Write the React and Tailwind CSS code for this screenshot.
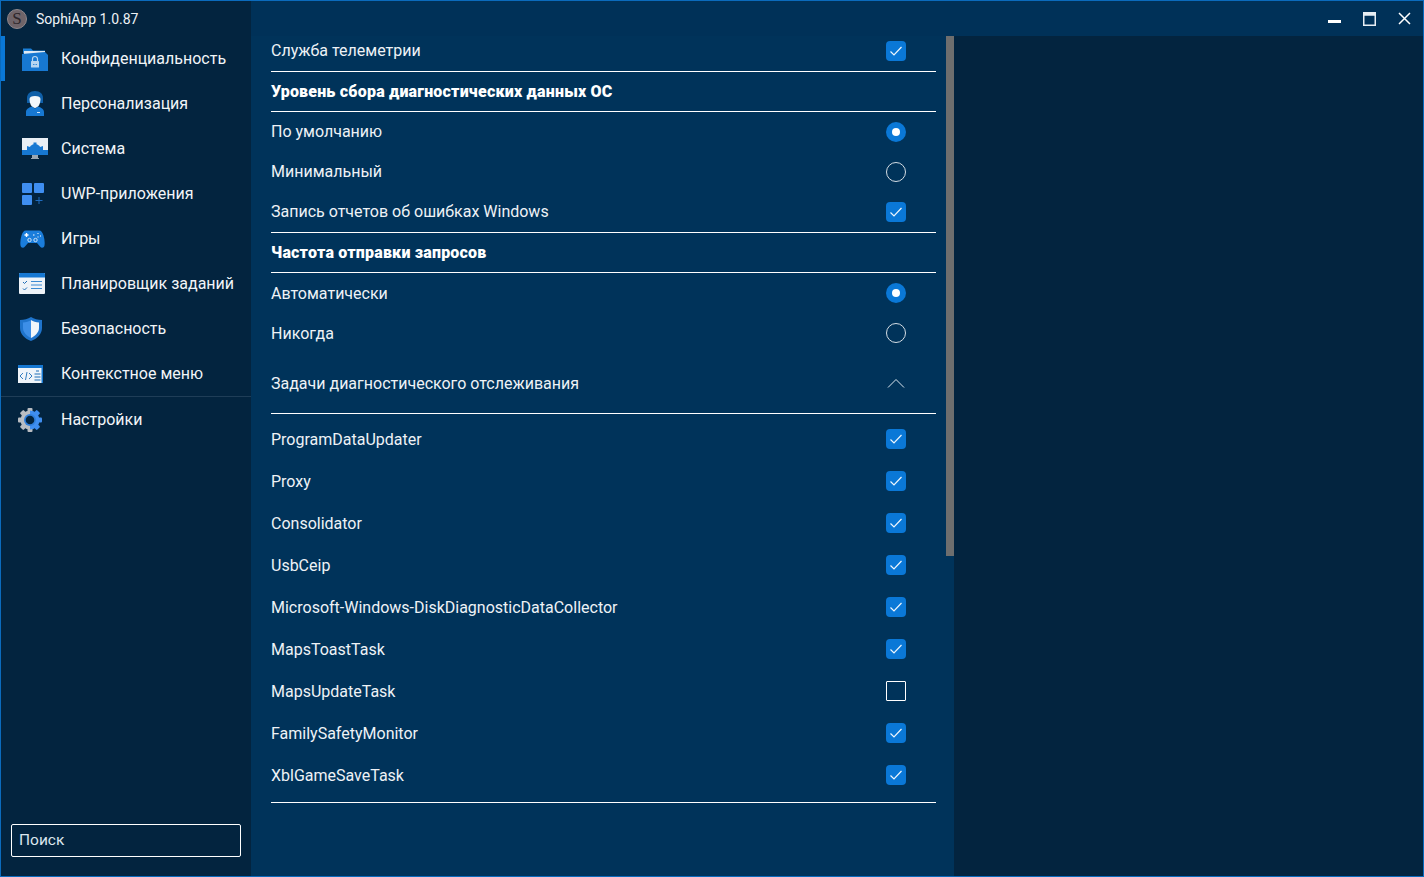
import React from 'react';

const FolderIcon = () => (
  <svg width="26" height="24" viewBox="0 0 26 24">
    <path d="M1 1.500 h8 l2 2 h12 v3 H1z" fill="#1a7fd8" />
    <path d="M2 4 h21 v6 H2z" fill="#dfeaf5" />
    <path d="M0 7 l23 -2 l3 3 v16 H0z" fill="#1778d2" />
    <path d="M10.500 14 v-2 a2.500 2.500 0 0 1 5 0 v2" fill="none" stroke="#b9d6f0" strokeWidth="1.200" />
    <rect x="9" y="14" width="8" height="6.500" rx="0.500" fill="#b9d6f0" />
    <path d="M11 17.500h.8M12.600 17.500h.8M14.200 17.500h.8" stroke="#1778d2" strokeWidth="1" />
  </svg>
);

const PersonIcon = () => (
  <svg width="18" height="25" viewBox="0 0 18 25">
    <path d="M9 0 c-5 0 -8 3 -8 7 v5 h16 v-5 c0 -4 -3 -7 -8 -7z" fill="#0f5fa8" />
    <path d="M3.500 8 c0 -2 2 -3 5.500 -3 s5.500 1 5.500 3 c0 5 -2.500 9 -5.500 9 s-5.500 -4 -5.500 -9z" fill="#f4f7fa" />
    <path d="M0 25 v-4 c0 -3 3 -4.500 6 -5.500 l3 2 l3 -2 c3 1 6 2.500 6 5.500 v4z" fill="#1778d2" />
    <rect x="11" y="21" width="3" height="1" fill="#cfe4f7" />
  </svg>
);

const MonitorIcon = () => (
  <svg width="26" height="21" viewBox="0 0 26 21">
    <rect x="0" y="0" width="26" height="17" fill="#e9eff5" />
    <rect x="0" y="12" width="26" height="5" fill="#1778d2" />
    <path d="M7 12 a6 6 0 0 1 12 0z" fill="#1778d2" />
    <path d="M11.500 4.500 h3 v3 h-3z" fill="#1778d2" />
    <path d="M5 8 l3 1 v3 h-3z M21 8 l-3 1 v3 h3z" fill="#1778d2" />
    <rect x="10" y="17" width="6" height="3" fill="#9aa7b3" />
    <rect x="9" y="20" width="8" height="1" fill="#9aa7b3" />
  </svg>
);

const AppsIcon = () => (
  <svg width="24" height="22" viewBox="0 0 24 22">
    <rect x="0" y="0" width="10" height="10" rx="1" fill="#3f8ef0" />
    <rect x="12" y="0" width="10" height="10" rx="1" fill="#3f8ef0" />
    <rect x="0" y="12" width="10" height="10" rx="1" fill="#3f8ef0" />
    <path d="M17 14 v7 M13.500 17.500 h7" stroke="#1f6cc0" strokeWidth="1" />
  </svg>
);

const GameIcon = () => (
  <svg width="25" height="18" viewBox="0 0 25 18">
    <path d="M6 0.500 h13 c2.500 0 3.500 2 4.500 5 c1 3.500 1.500 7 1 10 c-0.500 2.500 -3 3 -4.500 1 l-3 -3.500 h-9 l-3 3.500 c-1.500 2 -4 1.500 -4.500 -1 c-0.500 -3 0 -6.500 1 -10 c1 -3 2 -5 4.500 -5z" fill="#1a7ddb" />
    <path d="M6.500 3 v4 M4.500 5 h4" stroke="#fff" strokeWidth="1.400" />
    <circle cx="9.500" cy="10" r="1.700" fill="none" stroke="#dbe9f6" strokeWidth="0.900" />
    <circle cx="15.500" cy="10" r="1.700" fill="none" stroke="#dbe9f6" strokeWidth="0.900" />
    <path d="M13 5h1.500M17.500 3.500h1M20 6h1M17.500 7h1" stroke="#fff" strokeWidth="1.100" />
  </svg>
);

const TasksIcon = () => (
  <svg width="26" height="21" viewBox="0 0 26 21">
    <rect x="0" y="0" width="26" height="21" rx="1" fill="#eef3f8" />
    <path d="M0 1 a1 1 0 0 1 1 -1 h24 a1 1 0 0 1 1 1 v3.500 H0z" fill="#1778d2" />
    <path d="M4 9 l1.500 1.500 l2.500 -2.500 M4 15.500 l1.500 1.500 l2.500 -2.500" fill="none" stroke="#1e6eb8" strokeWidth="1" />
    <path d="M12 8.500 h11 M12 12 h11 M12 15.500 h11" stroke="#3b8ad2" strokeWidth="1.100" />
  </svg>
);

const ShieldIcon = () => (
  <svg width="22" height="24" viewBox="0 0 22 24">
    <path d="M11 0 c3 2 7 3 11 3 v8 c0 6 -5 11 -11 13 c-6 -2 -11 -7 -11 -13 v-8 c4 0 8 -1 11 -3z" fill="#1f74cc" />
    <path d="M11 3 v18 c-4 -2 -8 -5.500 -8 -10 v-5.500 c3 0 6 -1 8 -2.500z" fill="#3d8fe8" />
    <path d="M11 3 c2 1.500 5 2.500 8 2.500 v5.500 c0 4.500 -4 8 -8 10z" fill="#f2f6fa" />
  </svg>
);

const CodeIcon = () => (
  <svg width="25" height="18" viewBox="0 0 25 18">
    <rect x="0" y="0" width="25" height="18" fill="#eff4f9" />
    <rect x="0" y="0" width="25" height="3" fill="#1778d2" />
    <rect x="23.500" y="0" width="1.500" height="18" fill="#1778d2" />
    <path d="M5 8 l-3 3 l3 3 M9 7 l-1.500 8 M11 8 l3 3 l-3 3" fill="none" stroke="#1e6eb8" strokeWidth="0.900" />
    <path d="M18 6 h3 M16.500 9 h6 M16.500 12 h6 M16.500 15 h6" stroke="#1e6eb8" strokeWidth="1.200" />
  </svg>
);

const GearIcon = () => {
  const teeth = [0, 45, 90, 135, 180, 225, 270, 315];
  return (
    <svg width="24" height="24" viewBox="0 0 24 24">
      {teeth.map((a) => (
        <rect
          key={a}
          x="9.500"
          y="0"
          width="5"
          height="5"
          rx="1"
          fill={a > 0 && a < 180 ? '#3f8ef0' : '#b9bdc2'}
          transform={`rotate(${a} 12 12)`}
        />
      ))}
      <path d="M12 2.500 a9.500 9.500 0 0 1 0 19z" fill="#3f8ef0" />
      <path d="M12 2.500 a9.500 9.500 0 0 0 0 19z" fill="#b9bdc2" />
      <circle cx="12" cy="12" r="6" fill="#2f7fdc" />
      <circle cx="12" cy="12" r="4.300" fill="#03243f" />
    </svg>
  );
};

const Check = ({ on }) =>
  on ? (
    <span className="w-5 h-5 rounded-sm bg-[#0a78d7] flex items-center justify-center">
      <svg width="14" height="12" viewBox="0 0 14 12" fill="none">
        <path d="M1.500 6.500 L5 10 L12.500 2" stroke="#eef6fd" strokeWidth="1.200" />
      </svg>
    </span>
  ) : (
    <span className="w-5 h-5 rounded-[1px] border border-white" />
  );

const Radio = ({ on }) =>
  on ? (
    <span className="w-5 h-5 rounded-full bg-[#0a78d7] flex items-center justify-center">
      <span className="w-2 h-2 rounded-full bg-white" />
    </span>
  ) : (
    <span className="w-5 h-5 rounded-full border border-[#d5dde4]" />
  );

const menu = [
  { name: 'Конфиденциальность', icon: <FolderIcon />, x: 'pl-[21px]', active: true },
  { name: 'Персонализация', icon: <PersonIcon />, x: 'pl-[25px]' },
  { name: 'Система', icon: <MonitorIcon />, x: 'pl-[21px]' },
  { name: 'UWP-приложения', icon: <AppsIcon />, x: 'pl-[21px]' },
  { name: 'Игры', icon: <GameIcon />, x: 'pl-[19px]' },
  { name: 'Планировщик заданий', icon: <TasksIcon />, x: 'pl-[18px]' },
  { name: 'Безопасность', icon: <ShieldIcon />, x: 'pl-[19px]' },
  { name: 'Контекстное меню', icon: <CodeIcon />, x: 'pl-[17px]' },
];

const tasks = [
  ['ProgramDataUpdater', true],
  ['Proxy', true],
  ['Consolidator', true],
  ['UsbCeip', true],
  ['Microsoft-Windows-DiskDiagnosticDataCollector', true],
  ['MapsToastTask', true],
  ['MapsUpdateTask', false],
  ['FamilySafetyMonitor', true],
  ['XblGameSaveTask', true],
];

function MenuItem({ item }) {
  return (
    <div className="relative h-[45px] flex items-center">
      {item.active && <span className="absolute left-0 top-0 w-1 h-full bg-[#0a78d7]" />}
      <span className={`w-[60px] shrink-0 flex items-center ${item.x}`}>{item.icon}</span>
      <span className="text-base text-[#f2f5f8]">{item.name}</span>
    </div>
  );
}

function Row({ title, h = 'h-10', low, children }) {
  return (
    <div className={`${h} flex items-center justify-between pr-[30px] shrink-0`}>
      <span className={`text-base text-[#eef2f6] ${low ? 'mt-[2px]' : ''}`}>{title}</span>
      {children}
    </div>
  );
}

function Heading({ title }) {
  return (
    <div className="h-[39px] flex items-center border-b border-white shrink-0 box-content">
      <span className="text-base font-black tracking-[0.2px] text-white">{title}</span>
    </div>
  );
}

export default function App() {
  return (
    <div className="w-full h-screen flex border border-[#0b6bbd] overflow-hidden font-['Roboto',sans-serif] bg-[#00335a]">
      <aside className="w-[250px] shrink-0 bg-[#03243f] flex flex-col">
        <div className="h-[35px] shrink-0 flex items-center pl-[6px]">
          <span className="w-5 h-5 rounded-full bg-[#6f6469] border border-[#8f878b] flex items-center justify-center text-[17px] leading-none text-[#2c2529] font-['Liberation_Serif',serif]">
            S
          </span>
          <span className="ml-[9px] text-sm text-[#eef2f6]">SophiApp 1.0.87</span>
        </div>
        {menu.map((item) => (
          <MenuItem key={item.name} item={item} />
        ))}
        <div className="border-t border-[#1f3d57]">
          <MenuItem item={{ name: 'Настройки', icon: <GearIcon />, x: 'pl-[17px]' }} />
        </div>
        <div className="mt-auto px-[10px] pb-[19px]">
          <div className="h-[33px] border border-white rounded-[2px] flex items-center px-[7px] text-[15.5px] text-[#dbe6ee]">
            Поиск
          </div>
        </div>
      </aside>

      <main className="flex-1 min-w-0 flex flex-col">
        <header className="h-[35px] shrink-0 flex items-center justify-end bg-[#003158]">
          <svg width="13" height="3" viewBox="0 0 13 3" className="mt-[5px]">
            <rect width="13" height="3" fill="#fff" />
          </svg>
          <svg width="13" height="14" viewBox="0 0 13 14" className="ml-[22px]" fill="none">
            <path d="M0.750 3 h11.500 v10.250 H0.750z" stroke="#e8eef3" strokeWidth="1.500" />
            <rect width="13" height="3" fill="#e8eef3" />
          </svg>
          <svg width="13" height="13" viewBox="0 0 13 13" className="ml-[22px] mr-3" fill="none">
            <path d="M1 1 L12 12 M12 1 L1 12" stroke="#fff" strokeWidth="1.500" />
          </svg>
        </header>

        <div className="flex-1 min-h-0 flex">
          <div className="w-[703px] shrink-0 flex bg-[#00335a]">
            <div className="flex-1 flex flex-col pl-5 pr-[10px]">
              <Row title="Служба телеметрии" h="h-[30px] pb-[5px] box-content border-b border-white">
                <Check on />
              </Row>
              <Heading title="Уровень сбора диагностических данных ОС" />
              <Row title="По умолчанию">
                <Radio on />
              </Row>
              <Row title="Минимальный">
                <Radio />
              </Row>
              <Row title="Запись отчетов об ошибках Windows" h="h-10 box-content border-b border-white">
                <Check on />
              </Row>
              <Heading title="Частота отправки запросов" />
              <Row title="Автоматически" low>
                <Radio on />
              </Row>
              <Row title="Никогда" low>
                <Radio />
              </Row>
              <Row title="Задачи диагностического отслеживания" h="h-[60px] box-content border-b border-white" low>
                <svg width="18" height="10" viewBox="0 0 18 10" fill="none" className="mr-px">
                  <path d="M1 9.500 L9 1.500 L17 9.500" stroke="#dbe6ee" strokeWidth="1" />
                </svg>
              </Row>
              <div className="pt-1 pb-[6px] border-b border-white">
                {tasks.map(([name, on]) => (
                  <Row key={name} title={name} h="h-[42px]" low>
                    <Check on={on} />
                  </Row>
                ))}
              </div>
            </div>
            <div className="w-2 h-[520px] shrink-0 bg-[#6e6e6e]" />
          </div>
          <div className="flex-1 bg-[#03243f]" />
        </div>
      </main>
    </div>
  );
}
